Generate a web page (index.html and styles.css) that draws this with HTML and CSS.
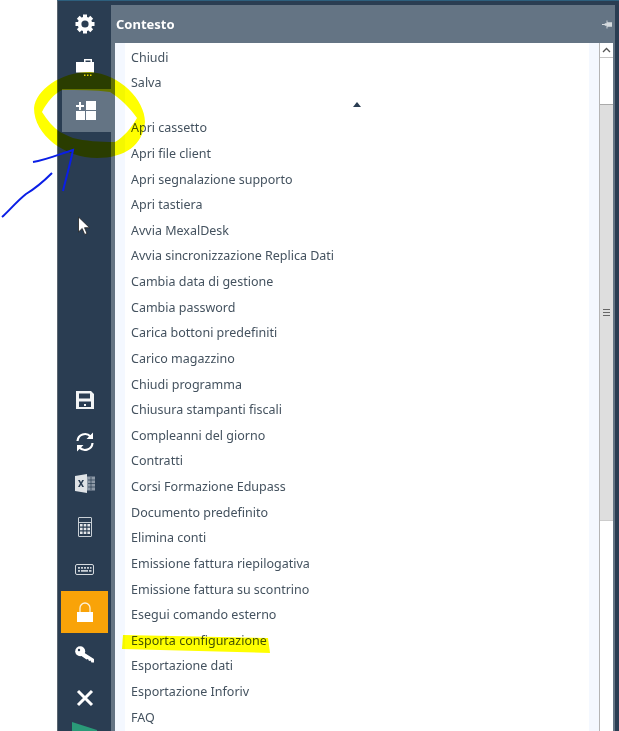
FILE: index.html
```html
<!DOCTYPE html>
<html lang="en">
<head>
    <meta charset="UTF-8">
    <meta name="viewport" content="width=device-width, initial-scale=1.0">
    <title>Contesto</title>
    <link rel="stylesheet" href="styles.css">
</head>
<body>
    <div class="window">
        <!-- Sidebar -->
        <div class="sidebar">
            <div class="side-top">
                <div class="side-btn gear">
                    <svg width="20" height="20" viewBox="0 0 20 20">
                        <g fill="#fff">
                            <rect x="8" y="0.500" width="4" height="19"/>
                            <rect x="8" y="0.500" width="4" height="19" transform="rotate(45 10 10)"/>
                            <rect x="8" y="0.500" width="4" height="19" transform="rotate(90 10 10)"/>
                            <rect x="8" y="0.500" width="4" height="19" transform="rotate(135 10 10)"/>
                            <circle cx="10" cy="10" r="7.300"/>
                        </g>
                        <circle cx="10" cy="10" r="3.600" fill="#2a3d52"/>
                    </svg>
                </div>
                <div class="side-btn">
                    <svg width="18" height="18" viewBox="0 0 18 18"><path fill="#fff" d="M8 3V0h8v3h-1.500V1.500h-5V3zM0 3h18v10.500H0z"/><path fill="#e8d84a" d="M8 15.500h1.500V17H8zM11 15.500h1.500V17H11zM14 15.500h1.500V17H14z"/></svg>
                </div>
                <div class="side-btn active">
                    <svg width="20" height="19" viewBox="0 0 20 19"><path fill="#fff" d="M10 0h10v9H10zM0 10h9v9H0zM10 10h10v9H10zM3 1h2v3h3v2H5v3H3V6H0V4h3z"/></svg>
                </div>
                <div class="side-btn pointer">
                    <svg width="14" height="20" viewBox="0 0 14 20"><path fill="#fff" stroke="#222" stroke-width=".8" d="M1.500 1v15l3.700-3.500 2.500 6 2.300-1-2.500-5.800h5z"/></svg>
                </div>
            </div>
            <div class="side-bottom">
                <div class="tool save">
                    <svg width="18" height="18" viewBox="0 0 18 18"><path fill="#f2f4f5" fill-rule="evenodd" d="M0 0h15l3 3v15H0zM3 2.500v5h11v-5zM3 10.500v5.500h12v-5.500zM8 13h2v2H8z"/></svg>
                </div>
                <div class="tool sync">
                    <svg width="20" height="20" viewBox="0 0 20 20"><path fill="none" stroke="#fff" stroke-width="2.200" d="M2.500 9A7.500 7.500 0 0 1 15.500 4.500M17.500 11A7.500 7.500 0 0 1 4.500 15.500"/><path fill="#fff" d="M18 .5v6.500h-6.500zM2 19.500V13h6.500z"/></svg>
                </div>
                <div class="tool">
                    <svg width="20" height="19" viewBox="0 0 20 19"><path fill="#8d99a6" d="M12 2.500h8v14h-8z"/><path stroke="#2a3d52" stroke-width=".7" d="M13 6h7M13 9.500h7M13 13h7M16 3v13"/><path fill="#dfe3e6" d="M0 2 12 0v19L0 17z"/><path fill="#2a3d52" d="M3 6h1.800l1.200 2.300L7.200 6H9L7 9.500l2 3.500H7.200L6 10.700 4.800 13H3l2-3.500z"/></svg>
                </div>
                <div class="tool">
                    <svg width="14" height="20" viewBox="0 0 14 20"><path fill="none" stroke="#c9d0d6" d="M1 .5h12a.5.5 0 0 1 .5.500v18a.5.5 0 0 1-.5.500H1a.5.5 0 0 1-.5-.500V1A.5.5 0 0 1 1 .5zM1 5.500h12"/><path fill="#e4e7ea" d="M2 7h2.600v2.500H2zM5.700 7h2.600v2.500H5.700zM9.400 7H12v2.500H9.400zM2 10.800h2.600v2.500H2zM5.700 10.800h2.600v2.500H5.700zM9.400 10.800H12v2.500H9.400zM2 14.600h2.600v2.500H2zM5.700 14.600h2.600v2.500H5.700zM9.400 14.600H12v2.500H9.400z"/></svg>
                </div>
                <div class="tool">
                    <svg width="19" height="11" viewBox="0 0 19 11"><rect x=".5" y=".5" width="18" height="10" rx="1.500" fill="none" stroke="#d5dade"/><path fill="#c9d0d6" d="M3 3h2v1.800H3zM6 3h2v1.800H6zM9 3h2v1.800H9zM12 3h2v1.800h-2zM15 3h1.500v1.800H15zM3 6h2v1.800H3zM6 6h7v1.800H6zM14 6h2.500v1.800H14z"/></svg>
                </div>
                <div class="tool lock">
                    <svg width="16" height="20" viewBox="0 0 16 20"><path fill="none" stroke="#fdf1d8" stroke-width="1.300" d="M3 10V6a5 5 0 0 1 10 0v4"/><path fill="#fff" d="M0 10h16v10H0z"/></svg>
                </div>
                <div class="tool">
                    <svg width="19" height="17" viewBox="0 0 19 17"><circle cx="5.200" cy="5.200" r="5" fill="#fff"/><path fill="#fff" d="M8 6l11 7v3.500h-2.500l-1-2-1.500.5-1-2-1.500.5L5 9z"/><circle cx="4" cy="4" r="1.200" fill="#2a3d52"/></svg>
                </div>
                <div class="tool">
                    <svg width="18" height="18" viewBox="0 0 18 18"><path stroke="#fff" stroke-width="3" d="M2 2l14 14M16 2L2 16"/></svg>
                </div>
                <div class="tool last">
                    <svg width="26" height="9" viewBox="0 0 26 9"><path fill="#2a9a78" d="M0 0l25 8v1H0z"/></svg>
                </div>
            </div>
        </div>

        <!-- Panel -->
        <div class="panel">
            <div class="panel-head">
                <span class="panel-title">Contesto</span>
                <svg width="10" height="9" viewBox="0 0 11 9"><path fill="#d5dade" d="M0 4h3V3h2V0h1v2h5v5H6v2H5V6H3V5H0z"/></svg>
            </div>
            <div class="panel-body">
                <ul class="list">
                    <li>Chiudi</li>
                    <li>Salva</li>
                    <li class="sep"><span class="up"></span></li>
                    <li>Apri cassetto</li>
                    <li>Apri file client</li>
                    <li>Apri segnalazione supporto</li>
                    <li>Apri tastiera</li>
                    <li>Avvia MexalDesk</li>
                    <li>Avvia sincronizzazione Replica Dati</li>
                    <li>Cambia data di gestione</li>
                    <li>Cambia password</li>
                    <li>Carica bottoni predefiniti</li>
                    <li>Carico magazzino</li>
                    <li>Chiudi programma</li>
                    <li>Chiusura stampanti fiscali</li>
                    <li>Compleanni del giorno</li>
                    <li>Contratti</li>
                    <li>Corsi Formazione Edupass</li>
                    <li>Documento predefinito</li>
                    <li>Elimina conti</li>
                    <li>Emissione fattura riepilogativa</li>
                    <li>Emissione fattura su scontrino</li>
                    <li>Esegui comando esterno</li>
                    <li>Esporta configurazione</li>
                    <li>Esportazione dati</li>
                    <li>Esportazione Inforiv</li>
                    <li>FAQ</li>
                </ul>
                <div class="scrollbar">
                    <div class="arrow">
                        <svg width="9" height="6" viewBox="0 0 9 6"><path fill="none" stroke="#555" stroke-width="1.300" d="M1 5l3.500-3.500L8 5"/></svg>
                    </div>
                    <div class="track-top"></div>
                    <div class="thumb"><span class="grip"></span></div>
                    <div class="track-bottom"></div>
                </div>
            </div>
        </div>
    </div>

    <!-- Hand drawn marks on top of the screenshot -->
    <svg class="marks" width="619" height="731" viewBox="0 0 619 731">
        <g class="hl">
            <path d="M34 108C36 90 60 72 90 72C120 74 145 100 145 122C143 145 125 158 97 158C65 158 34 135 34 108zM42 112C47 102 54 94 62 90C78 90 95 90 110 92C120 98 130 108 137 118C131 128 124 137 115 142C100 142 85 141 73 138C68 136 64 134 60 132C53 127 47 120 42 112z" fill="#ffff00" fill-rule="evenodd"/>
            <path d="M123 635L268 638L270 653L122 649z" fill="#ffff00"/>
        </g>
        <path d="M33 162C46 160 60 154 73 150C70 165 66 178 63 191M52 173C44 181 36 188 26 194C16 202 8 212 2 217" fill="none" stroke="#0a1ee6" stroke-width="2"/>
    </svg>
</body>
</html>
```

FILE: styles.css
```css
body {
    margin: 0;
    width: 619px;
    height: 731px;
    overflow: hidden;
    background-color: white;
    font-family: "Noto Sans", sans-serif;
    position: relative;
}
.window {
    margin-left: 57px;
    width: 562px;
    height: 731px;
    display: flex;
    background-color: #2a3d52;
    border-top: 1px solid #2d5f7d;
    border-left: 1px solid #5a6570;
    padding-top: 2px;
    box-sizing: border-box;
}
.sidebar {
    width: 53px;
    height: 728px;
    display: flex;
    flex-direction: column;
    justify-content: space-between;
    flex-shrink: 0;
}
.side-btn {
    height: 43px;
    margin-left: 4px;
    display: flex;
    align-items: center;
    justify-content: center;
    padding-right: 3px;
}
.side-btn.gear {
    height: 41px;
    margin-bottom: 2px;
}
.side-btn.active {
    background-color: #647484;
    padding-right: 1px;
}
.side-btn.pointer {
    margin-top: 72px;
    padding-right: 5px;
}
.side-bottom {
    display: flex;
    flex-direction: column;
}
.tool {
    height: 43px;
    margin-left: 3px;
    margin-right: 3px;
    display: flex;
    align-items: center;
    justify-content: center;
}
.tool.sync {
    height: 41px;
}
.tool.lock {
    background-color: #f9a308;
    height: 42px;
}
.tool.last {
    height: 12px;
    align-items: flex-end;
}
.panel {
    flex: 1;
    margin-top: 2px;
    margin-right: 4px;
    display: flex;
    flex-direction: column;
    background-color: #647484;
    padding-right: 2px;
}
.panel-head {
    height: 38px;
    display: flex;
    align-items: center;
    justify-content: space-between;
    padding: 0 1px 0 5px;
    flex-shrink: 0;
}
.panel-title {
    color: white;
    font-size: 13px;
    font-weight: bold;
}
.panel-body {
    flex: 1;
    display: flex;
    margin-left: 4px;
    background-color: white;
    min-height: 0;
    overflow: hidden;
}
.list {
    list-style: none;
    margin: 0;
    padding: 1.5px 0 0 16px;
    flex: 1;
    background: linear-gradient(to right, #f4f8ff 10px, #fff 10px, #fff calc(100% - 10px), #f4f8ff calc(100% - 10px));
}
.list li {
    height: 25.63px;
    line-height: 25.63px;
    font-size: 12.5px;
    color: #44525f;
    white-space: nowrap;
}
.list .sep {
    height: 19.5px;
    position: relative;
}
.up {
    position: absolute;
    left: 222px;
    top: 6px;
    border-left: 4px solid transparent;
    border-right: 4px solid transparent;
    border-bottom: 5px solid #2a3d52;
}
.scrollbar {
    width: 14px;
    display: flex;
    flex-direction: column;
    border-left: 1px solid #b5b5b5;
    box-sizing: border-box;
    flex-shrink: 0;
}
.arrow {
    height: 14px;
    border-bottom: 1px solid #c4c4c4;
    display: flex;
    align-items: center;
    justify-content: center;
}
.track-top {
    height: 46px;
}
.thumb {
    height: 417px;
    background-color: #dedede;
    border-top: 1px solid #aaa;
    border-bottom: 1px solid #ccc;
    box-sizing: border-box;
    display: flex;
    align-items: center;
    justify-content: center;
}
.grip {
    width: 7px;
    height: 7px;
    border-top: 1px solid #666;
    border-bottom: 1px solid #666;
    background: linear-gradient(#fff0 2px, #666 2px, #666 3px, #fff0 3px);
    box-sizing: border-box;
}
.track-bottom {
    flex: 1;
}
.marks {
    position: absolute;
    left: 0;
    top: 0;
}
.hl {
    mix-blend-mode: multiply;
}
```
